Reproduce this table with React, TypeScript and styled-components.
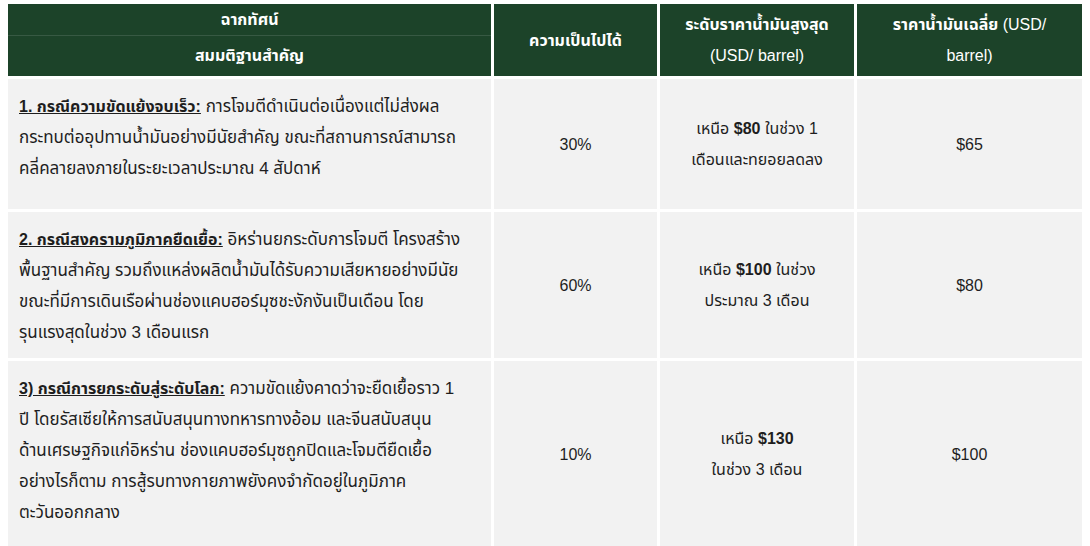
import React from "react";
import styled, { createGlobalStyle } from "styled-components";

const GlobalStyle = createGlobalStyle`
  html, body {
    margin: 0;
    padding: 0;
    background: #ffffff;
  }
  body {
    font-family: "Liberation Sans", "Noto Sans Thai", "DejaVu Sans", sans-serif;
  }
`;

const Page = styled.div`
  padding: 4px 8px 0 8px;
  width: 1090px;
  height: 546px;
  box-sizing: border-box;
  overflow: hidden;
`;

// ตาราง - grid 4 คอลัมน์ เส้นขาวคั่น
const Table = styled.div`
  display: grid;
  grid-template-columns: 483px 163px 194px 225px;
  grid-template-rows: 72px 130px 146px 186px;
  gap: 3px;
  background: #ffffff;
`;

const HeadCell = styled.div`
  background: #1c4329;
  color: #ffffff;
  font-weight: 700;
  font-size: 16px;
  line-height: 31px;
  display: flex;
  flex-direction: column;
  justify-content: center;
  align-items: center;
  text-align: center;
`;

const HeadSplit = styled.div`
  background: #1c4329;
  color: #ffffff;
  font-weight: 700;
  font-size: 16px;
  display: grid;
  grid-template-rows: 31px 1fr;
`;

const HeadPart = styled.div<{ $line?: boolean }>`
  display: flex;
  align-items: center;
  justify-content: center;
  border-top: ${(p) => (p.$line ? "1px solid rgba(255,255,255,0.12)" : "none")};
`;

// ตัวอักษรละตินในหัวตารางเป็นตัวปกติ
const Latin = styled.span`
  font-weight: 400;
`;

const Cell = styled.div<{ $center?: boolean }>`
  background: #f2f2f2;
  color: #1e1e1e;
  font-size: 16px;
  line-height: 31px;
  display: flex;
  flex-direction: column;
  justify-content: ${(p) => (p.$center ? "center" : "flex-start")};
  align-items: ${(p) => (p.$center ? "center" : "flex-start")};
  text-align: ${(p) => (p.$center ? "center" : "left")};
  padding: ${(p) => (p.$center ? "0" : "12px 11px")};
  box-sizing: border-box;
  white-space: nowrap;
`;

// ข้อความอธิบายในคอลัมน์แรก
const Desc = styled.span`
  font-size: 17px;
`;

const Lead = styled.span`
  font-size: 16px;
  font-weight: 700;
  text-decoration: underline;
`;

const rows = [
  {
    lead: "1. กรณีความขัดแย้งจบเร็ว:",
    lines: [
      " การโจมตีดำเนินต่อเนื่องแต่ไม่ส่งผล",
      "กระทบต่ออุปทานน้ำมันอย่างมีนัยสำคัญ ขณะที่สถานการณ์สามารถ",
      "คลี่คลายลงภายในระยะเวลาประมาณ 4 สัปดาห์",
    ],
    chance: "30%",
    peak: [["เหนือ ", "$80", " ในช่วง 1"], ["เดือนและทยอยลดลง"]],
    avg: "$65",
  },
  {
    lead: "2. กรณีสงครามภูมิภาคยืดเยื้อ:",
    lines: [
      " อิหร่านยกระดับการโจมตี โครงสร้าง",
      "พื้นฐานสำคัญ รวมถึงแหล่งผลิตน้ำมันได้รับความเสียหายอย่างมีนัย",
      "ขณะที่มีการเดินเรือผ่านช่องแคบฮอร์มุซชะงักงันเป็นเดือน โดย",
      "รุนแรงสุดในช่วง 3 เดือนแรก",
    ],
    chance: "60%",
    peak: [["เหนือ ", "$100", " ในช่วง"], ["ประมาณ 3 เดือน"]],
    avg: "$80",
  },
  {
    lead: "3) กรณีการยกระดับสู่ระดับโลก:",
    lines: [
      " ความขัดแย้งคาดว่าจะยืดเยื้อราว 1",
      "ปี โดยรัสเซียให้การสนับสนุนทางทหารทางอ้อม และจีนสนับสนุน",
      "ด้านเศรษฐกิจแก่อิหร่าน ช่องแคบฮอร์มุซถูกปิดและโจมตียืดเยื้อ",
      "อย่างไรก็ตาม การสู้รบทางกายภาพยังคงจำกัดอยู่ในภูมิภาค",
      "ตะวันออกกลาง",
    ],
    chance: "10%",
    peak: [["เหนือ ", "$130"], ["ในช่วง 3 เดือน"]],
    avg: "$100",
  },
];

function App() {
  return (
    <>
      <GlobalStyle />
      <Page>
        <Table>
          <HeadSplit>
            <HeadPart>ฉากทัศน์</HeadPart>
            <HeadPart $line>สมมติฐานสำคัญ</HeadPart>
          </HeadSplit>
          <HeadCell>ความเป็นไปได้</HeadCell>
          <HeadCell>
            <span>ระดับราคาน้ำมันสูงสุด</span>
            <Latin>(USD/ barrel)</Latin>
          </HeadCell>
          <HeadCell>
            <span>
              ราคาน้ำมันเฉลี่ย <Latin>(USD/</Latin>
            </span>
            <Latin>barrel)</Latin>
          </HeadCell>

          {rows.map((r) => (
            <React.Fragment key={r.lead}>
              <Cell>
                <div>
                  <Lead>{r.lead}</Lead>
                  <Desc>{r.lines[0]}</Desc>
                </div>
                {r.lines.slice(1).map((l) => (
                  <Desc key={l}>{l}</Desc>
                ))}
              </Cell>
              <Cell $center>{r.chance}</Cell>
              <Cell $center>
                {r.peak.map((line, i) => (
                  <div key={i}>
                    {line.map((part, j) =>
                      part.startsWith("$") ? <b key={j}>{part}</b> : <span key={j}>{part}</span>
                    )}
                  </div>
                ))}
              </Cell>
              <Cell $center>{r.avg}</Cell>
            </React.Fragment>
          ))}
        </Table>
      </Page>
    </>
  );
}

export default App;
